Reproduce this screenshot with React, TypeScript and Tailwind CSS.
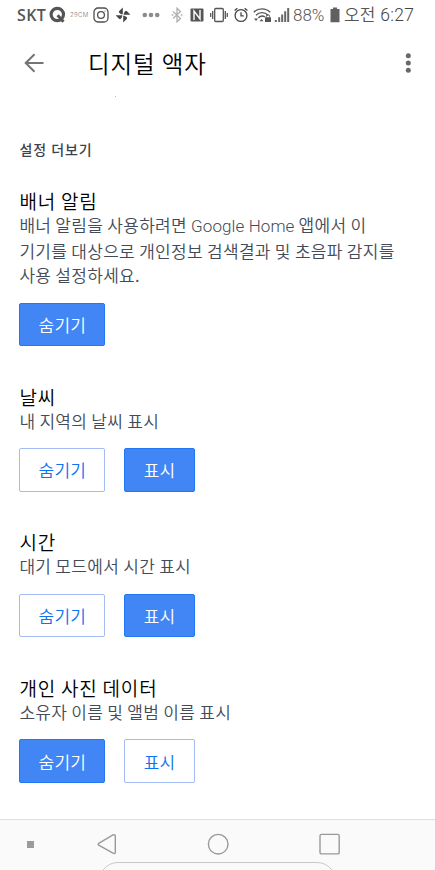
import type { ReactNode } from "react";

type Option = { label: string; active: boolean };
type Setting = { title: string; lines: ReactNode[]; options: Option[] };

const settings: Setting[] = [
    {
        title: "배너 알림",
        lines: [
            <>
                배너 알림을 사용하려면{" "}
                <span className="font-['Roboto','Noto_Sans_CJK_KR',sans-serif] font-light tracking-[0.1px]">Google Home</span> 앱에서 이
            </>,
            "기기를 대상으로 개인정보 검색결과 및 초음파 감지를",
            "사용 설정하세요.",
        ],
        options: [{ label: "숨기기", active: true }],
    },
    {
        title: "날씨",
        lines: ["내 지역의 날씨 표시"],
        options: [
            { label: "숨기기", active: false },
            { label: "표시", active: true },
        ],
    },
    {
        title: "시간",
        lines: ["대기 모드에서 시간 표시"],
        options: [
            { label: "숨기기", active: false },
            { label: "표시", active: true },
        ],
    },
    {
        title: "개인 사진 데이터",
        lines: ["소유자 이름 및 앨범 이름 표시"],
        options: [
            { label: "숨기기", active: true },
            { label: "표시", active: false },
        ],
    },
];

function StatusBar() {
    return (
        <div className="flex h-[30px] items-center pl-[17px] text-[#555] whitespace-nowrap">
            <span className="w-[32px] font-['Open_Sans',sans-serif] text-[16px] font-semibold leading-[30px] tracking-[0.4px]">SKT</span>
            <svg className="h-[18px] w-[17px]" viewBox="0 0 17 18" fill="none" stroke="#555">
                <circle cx="8.3" cy="8.5" r="6.2" strokeWidth="3.2" />
                <path d="M8.6 9.2L14.5 15.8" strokeWidth="3" />
            </svg>
            <span className="ml-[4px] w-[20px] font-['Inter',sans-serif] text-[6px] font-light leading-[30px] tracking-[0.4px] text-[#777]">29CM</span>
            <svg className="ml-[3px] h-[16px] w-[16px]" viewBox="0 0 16 16" fill="none" stroke="#505050" strokeWidth="1.3">
                <rect x="1" y="1" width="14" height="14" rx="4" />
                <circle cx="8" cy="8" r="3.4" />
                <circle cx="12" cy="4" r="0.6" fill="#505050" stroke="none" />
            </svg>
            <svg className="ml-[6px] h-[16px] w-[16px]" viewBox="0 0 16 16" fill="#484848">
                <path d="M7.8 7.3V.6L4 4.2v1.3c1 1.3 2.2 1.8 3.8 1.8z" />
                <path d="M8.7 7.8h6.7L11.8 4h-1.3C9.2 5 8.7 6.2 8.7 7.8z" />
                <path d="M8.2 8.7v6.7L12 11.8v-1.3c-1-1.3-2.2-1.8-3.8-1.8z" />
                <path d="M7.3 8.200H.6L4.2 12h1.300c1.300-1 1.800-2.200 1.800-3.800z" />
            </svg>
            <svg className="ml-[11px] h-[6px] w-[18px]" viewBox="0 0 18 6" fill="#8b8b8b">
                <circle cx="2.8" cy="3" r="2.3" />
                <circle cx="9" cy="3" r="2.3" />
                <circle cx="15.2" cy="3" r="2.3" />
            </svg>
            <svg className="ml-[11px] h-[16px] w-[12px]" viewBox="0 0 12 16" fill="none" stroke="#b0b0b0" strokeWidth="1.3">
                <path d="M2 4.4l7.5 7L6 14.8V1.2l3.5 3.4L2 11.6" />
                <path d="M.7 8h1.7M9.7 8h1.7" />
            </svg>
            <svg className="ml-[7px] h-[14px] w-[14px]" viewBox="0 0 14 14" fill="none">
                <rect x="0.5" y="0.5" width="13" height="13" rx="1" fill="#555" />
                <path d="M4 12V3l6 8V2" stroke="#fff" strokeWidth="1.4" />
            </svg>
            <svg className="ml-[6px] h-[16px] w-[18px]" viewBox="0 0 18 16" fill="none" stroke="#555" strokeWidth="1.3">
                <rect x="4.7" y="1.5" width="8.6" height="13" rx="1" />
                <path d="M2.7 4v8M15.3 4v8M.7 6v4M17.3 6v4" />
            </svg>
            <svg className="ml-[6px] h-[16px] w-[14px]" viewBox="0 0 14 16" fill="none" stroke="#484848" strokeWidth="1.3">
                <circle cx="7" cy="8.5" r="5.9" />
                <path d="M7 5.2v3.6h2.8M.6 3.600l2.800-2.400M13.400 3.600l-2.800-2.400" />
            </svg>
            <svg className="ml-[5px] h-[16px] w-[19px]" viewBox="0 0 19 16" fill="none" stroke="#555" strokeWidth="1.4">
                <path d="M.8 5.2C5.2.7 12.8.7 17.2 5.2M3 8.2c3.3-3.4 8.7-3.4 12 0M5.4 10.8c2-2 4.5-2.2 6.5-1" />
                <path d="M1 11.5h4l-2 2.6zM6.5 14.3l2-2.4 2 2.4z" fill="#555" stroke="none" />
                <path d="M13.3 10.6V9.5a1.7 1.7 0 0 1 3.4 0v1.1" strokeWidth="1" />
                <rect x="12" y="10.2" width="6" height="4.8" rx="0.6" fill="#555" stroke="none" />
            </svg>
            <svg className="ml-[2px] h-[16px] w-[16px]" viewBox="0 0 16 16" fill="#666">
                <path d="M.8 13h2v2h-2zM4.2 10.3h2V15h-2zM7.2 7.4h2V15h-2zM10.2 4.3h2V15h-2zM13.2 1h2v14h-2z" />
            </svg>
            <span className="ml-[3px] w-[33px] font-['Roboto',sans-serif] text-[17px] font-light leading-[30px]">88%</span>
            <svg className="ml-[4px] h-[16px] w-[10px]" viewBox="0 0 10 16" fill="#606060">
                <path d="M3 .5h4V2h2.5v13.3H.5V2H3z" />
            </svg>
            <span className="ml-[4px] font-['Noto_Sans_CJK_KR',sans-serif] text-[17px] font-[350] leading-[28px] -mt-[2px]">오전</span>
            <span className="ml-[5px] font-['Roboto',sans-serif] text-[17.5px] font-light leading-[30px] tracking-[0.3px] text-[#444]">6:27</span>
        </div>
    );
}

function Header() {
    return (
        <header className="flex h-[66px] items-center pl-[24px] pr-[22px]">
            <svg className="h-[20px] w-[20px]" viewBox="0 0 20 20" fill="none" stroke="#747474" strokeWidth="2">
                <path d="M19.5 10H2M10.5 1.2L1.7 10l8.8 8.8" />
            </svg>
            <h1 className="ml-[44px] text-[23.5px] font-[350] leading-[34px] tracking-[0.9px] text-black">디지털 액자</h1>
            <svg className="ml-auto h-[20px] w-[10px]" viewBox="0 0 10 20" fill="#686868">
                <circle cx="5.3" cy="2.7" r="2.5" />
                <circle cx="5.3" cy="10" r="2.5" />
                <circle cx="5.3" cy="17.3" r="2.5" />
            </svg>
        </header>
    );
}

function OptionButton({ label, active }: Option) {
    return (
        <button
            className={`h-[43.6px] rounded-[2px] border px-[18.2px] pt-px text-[17px] font-[350] leading-[24px] tracking-[0.2px] whitespace-nowrap ${
                active ? "border-[#2078f5] bg-[#4285f4] text-white" : "border-[#a3bcf5] bg-white text-[#0f72f0]"
            }`}
        >
            {label}
        </button>
    );
}

function NavBar() {
    return (
        <nav className="flex h-[51px] flex-col border-t border-[#dedede] bg-[#fafafa]">
            <div className="flex h-[40px] items-end pb-[4px]">
                <span className="mb-[8px] ml-[27px] h-[7px] w-[7px] bg-[#9b9b9b]" />
                <svg className="ml-[62px] h-[24px] w-[24px]" viewBox="0 0 24 24" fill="none" stroke="#999" strokeWidth="1.4">
                    <path d="M2.7 11.4L17 3q2.3-1 2.3 1.1v16.1q0 2.1-2.3 1L2.7 13.1q-1.2-.9 0-1.7z" />
                </svg>
                <svg className="ml-[86px] h-[24px] w-[24px]" viewBox="0 0 24 24" fill="none" stroke="#999" strokeWidth="1.4">
                    <circle cx="12.2" cy="12.2" r="9.8" />
                </svg>
                <svg className="ml-[88px] h-[24px] w-[24px]" viewBox="0 0 24 24" fill="none" stroke="#999" strokeWidth="1.4">
                    <rect x="2" y="2.4" width="19.2" height="19.5" rx="1.5" />
                </svg>
            </div>
            <svg className="mt-px ml-[100px] h-[9px] w-[235px]" viewBox="0 0 235 9" fill="none" stroke="#c8c8c8">
                <path d="M3 9Q9 1.500 18 1.500H217Q226 1.500 232 9" />
            </svg>
        </nav>
    );
}

export default function App() {
    return (
        <div className="flex h-[870px] w-[435px] flex-col overflow-hidden bg-white font-['Noto_Sans_CJK_KR',sans-serif]">
            <StatusBar />
            <Header />
            <main className="flex-1 pl-[19.4px]">
                <div className="ml-[96px] h-px w-px bg-[#bbb]" />
                <h2 className="mt-[40px] text-[14px] font-medium leading-[24px] tracking-[0.95px] text-[#3c4350]">설정 더보기</h2>
                <div className="mt-[27.4px] flex flex-col gap-[38px]">
                    {settings.map((setting) => (
                        <section key={setting.title}>
                            <h3 className="pt-[0.6px] text-[19px] font-[350] leading-[24px] tracking-[0.8px] text-black">{setting.title}</h3>
                            {setting.lines.map((line, i) => (
                                <p key={i} className="text-[17px] font-[350] leading-[24.6px] tracking-[0.3px] whitespace-nowrap text-[#444b58]">
                                    {line}
                                </p>
                            ))}
                            <div className="mt-[14.8px] flex gap-[19.2px]">
                                {setting.options.map((option) => (
                                    <OptionButton key={option.label} {...option} />
                                ))}
                            </div>
                        </section>
                    ))}
                </div>
            </main>
            <NavBar />
        </div>
    );
}
